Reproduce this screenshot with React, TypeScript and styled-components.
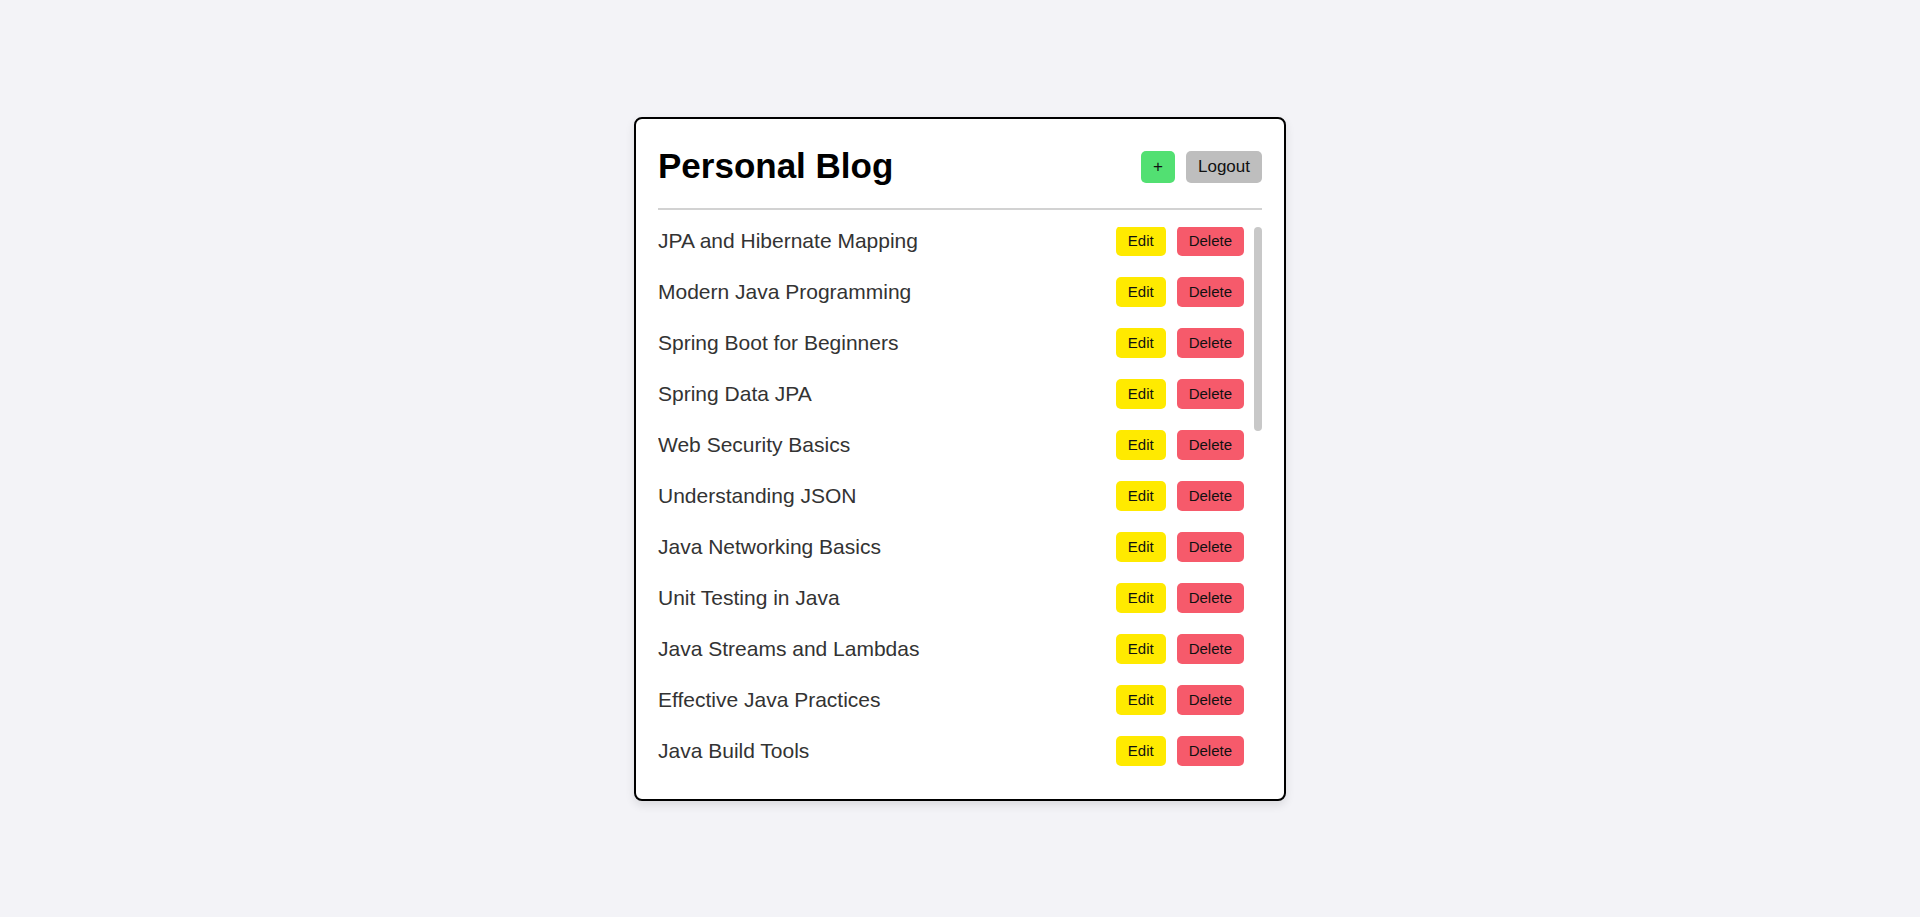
import React from "react";
import styled, { createGlobalStyle } from "styled-components";

const GlobalStyle = createGlobalStyle`
  html, body {
    margin: 0;
    padding: 0;
  }
  body {
    background: #f3f3f7;
    font-family: "Liberation Sans", Arial, sans-serif;
  }
  * { box-sizing: border-box; }
`;

const Page = styled.div`
  min-height: 100vh;
  display: flex;
  align-items: center;
  justify-content: center;
`;

const Card = styled.div`
  width: 652px;
  background: #ffffff;
  border: 2px solid #000000;
  border-radius: 8px;
  padding: 22px;
  box-shadow: 0 4px 10px rgba(0, 0, 0, 0.1);
`;

const Header = styled.div`
  display: flex;
  align-items: center;
  justify-content: space-between;
  padding-bottom: 18px;
  border-bottom: 2px solid #d2d2d2;
`;

const Title = styled.h1`
  margin: 0;
  font-size: 35px;
  line-height: 49px;
  font-weight: 700;
  color: #000000;
`;

const Actions = styled.div`
  display: flex;
  gap: 11px;
  margin-top: 4px;
`;

const Button = styled.button<{ $bg: string; $size?: number }>`
  border: none;
  border-radius: 5px;
  background: ${(p) => p.$bg};
  color: #111111;
  font-family: "Liberation Sans", Arial, sans-serif;
  font-size: ${(p) => p.$size ?? 15}px;
  line-height: 1.15;
  padding: 6px 12px;
  cursor: pointer;
`;

const ListFrame = styled.div`
  position: relative;
  margin-top: 17px;
`;

const List = styled.div`
  height: 550px;
  overflow-y: auto;
  padding-right: 18px;
  scrollbar-width: none;

  &::-webkit-scrollbar {
    display: none;
  }
`;

const ScrollThumb = styled.div`
  position: absolute;
  top: 0;
  right: 0;
  width: 8px;
  border-radius: 4px;
  background: #c8c8c8;
`;

const Row = styled.div`
  display: flex;
  align-items: center;
  justify-content: space-between;
  height: 29px;
  margin-bottom: 22px;
`;

const PostTitle = styled.span`
  font-size: 21px;
  color: #333333;
`;

const RowActions = styled.div`
  display: flex;
  gap: 11px;
`;

const posts = [
  "JPA and Hibernate Mapping",
  "Modern Java Programming",
  "Spring Boot for Beginners",
  "Spring Data JPA",
  "Web Security Basics",
  "Understanding JSON",
  "Java Networking Basics",
  "Unit Testing in Java",
  "Java Streams and Lambdas",
  "Effective Java Practices",
  "Java Build Tools",
  "Java Concurrency in Practice",
  "Microservices with Spring Cloud",
  "REST API Design",
  "Docker for Java Developers",
  "Design Patterns in Java",
  "Java Collections Framework",
  "Exception Handling Best Practices",
  "Introduction to Kotlin",
  "Maven vs Gradle",
  "Reactive Programming with WebFlux",
  "Java Memory Management",
  "Logging in Spring Boot",
  "Database Migrations with Flyway",
  "Java Generics Explained",
  "Building CLI Apps in Java",
  "Caching with Redis",
  "Testing with Mockito",
  "Deploying Java Apps",
];

const VISIBLE = 550;
const ROW = 51;

export default function App() {
  const [scroll, setScroll] = React.useState(0);
  const total = posts.length * ROW;
  const thumbH = (VISIBLE * VISIBLE) / total;
  const thumbTop = (scroll / Math.max(1, total - VISIBLE)) * (VISIBLE - thumbH);

  return (
    <>
      <GlobalStyle />
      <Page>
        <Card>
          <Header>
            <Title>Personal Blog</Title>
            <Actions>
              <Button $bg="#52e072" $size={17}>+</Button>
              <Button $bg="#bebebe" $size={17}>Logout</Button>
            </Actions>
          </Header>
          <ListFrame>
            <List onScroll={(e) => setScroll(e.currentTarget.scrollTop)}>
              {posts.map((p) => (
                <Row key={p}>
                  <PostTitle>{p}</PostTitle>
                  <RowActions>
                    <Button $bg="#ffea00">Edit</Button>
                    <Button $bg="#f65a6b">Delete</Button>
                  </RowActions>
                </Row>
              ))}
            </List>
            <ScrollThumb style={{ height: thumbH, top: thumbTop }} />
          </ListFrame>
        </Card>
      </Page>
    </>
  );
}
